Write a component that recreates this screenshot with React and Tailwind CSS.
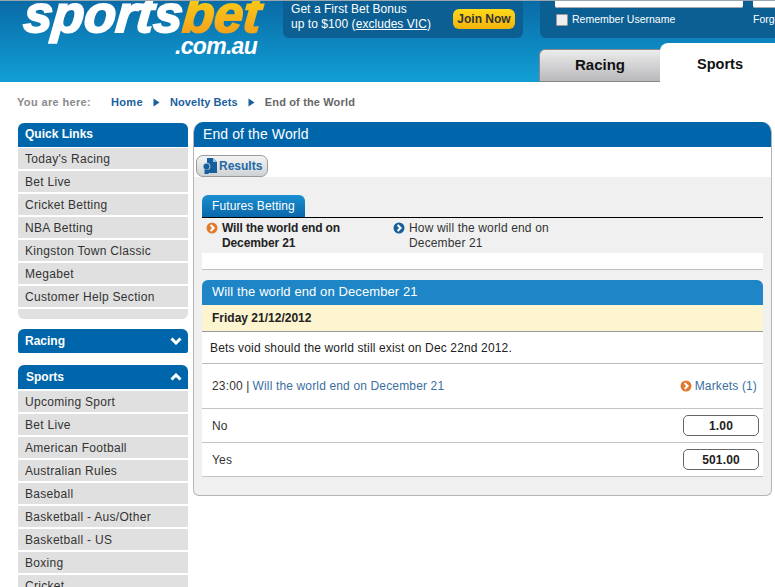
import React from "react";

const font = { fontFamily: '"Liberation Sans", Arial, sans-serif' };

function Chevron({ color }) {
  return (
    <svg width="12" height="12" viewBox="0 0 12 12" className="shrink-0">
      <circle cx="6" cy="6" r="5.5" fill={color} />
      <path d="M4.6 3l3 3-3 3" fill="none" stroke="#fff" strokeWidth="2" />
    </svg>
  );
}

function Caret({ up }) {
  return (
    <svg width="12" height="8" viewBox="0 0 12 8">
      <path d={up ? "M1.5 6.5L6 2l4.5 4.5" : "M1.5 1.5L6 6l4.5-4.5"} fill="none" stroke="#fff" strokeWidth="3" />
    </svg>
  );
}

function Crumb() {
  return (
    <svg width="7" height="9" viewBox="0 0 7 9" className="ml-[10px] mr-[10px]">
      <path d="M0.5 0.5l6 4-6 4z" fill="#1a5f9e" />
    </svg>
  );
}

function ResultIcon() {
  return (
    <svg width="16" height="16" viewBox="0 0 16 16" className="shrink-0">
      <path d="M5 0h6l4 4v11H5z" fill="#15609c" />
      <path d="M11 0l4 4h-4z" fill="#9cc3de" />
      <circle cx="4.5" cy="8.5" r="3.5" fill="#15609c" stroke="#dfe6ea" strokeWidth="0.8" />
      <path d="M2.5 11.5h4V16h-4z" fill="#15609c" />
    </svg>
  );
}

function Item({ children }) {
  return (
    <div className="h-[21px] bg-[#e0e0e0] pl-[7px] text-[12px] leading-[23px] tracking-[0.3px] text-[#333]">{children}</div>
  );
}

function SideHead({ children, up, caret, rounded, pl, extra }) {
  return (
    <div className={`flex items-center justify-between bg-[#0066ab] pr-[6px] text-[12px] font-bold text-white ${rounded} ${pl} ${extra}`}>
      <span>{children}</span>
      {caret && <Caret up={up} />}
    </div>
  );
}

function OddsRow({ label, value }) {
  return (
    <div className="flex h-[34px] items-center justify-between border-b border-[#c4c4c4] pl-[10px] pr-[4px] text-[12px] tracking-[0.15px] text-[#333]">
      <span>{label}</span>
      <span className="flex h-[21px] w-[76px] items-center justify-center rounded-[5px] border border-[#666] bg-white font-bold text-[12px] text-[#222]">{value}</span>
    </div>
  );
}

export default function App() {
  const quick = ["Today's Racing", "Bet Live", "Cricket Betting", "NBA Betting", "Kingston Town Classic", "Megabet", "Customer Help Section"];
  const sports = ["Upcoming Sport", "Bet Live", "American Football", "Australian Rules", "Baseball", "Basketball - Aus/Other", "Basketball - US", "Boxing", "Cricket"];
  return (
    <div className="h-[587px] w-[775px] overflow-hidden bg-white" style={font}>
      {/* header */}
      <header className="flex h-[82px] overflow-hidden border-t border-[#9aa7b0] bg-gradient-to-b from-[#0a6ba6] to-[#129fd6]">
        <div className="w-[283px] shrink-0 pl-[24px]">
          <div className="-mt-[12px] flex h-[50px] -skew-x-[5deg] items-center whitespace-nowrap text-[52px] font-bold italic leading-[52px]">
            <span className="text-white [-webkit-text-stroke:2px_white]">sports</span>
            <span className="bg-gradient-to-b from-[#fbd813] to-[#f09a1c] bg-clip-text pr-[4px] text-transparent [-webkit-text-stroke:2px_transparent]">bet</span>
          </div>
          <div className="-mt-[2px] pl-[151px] text-[23px] font-bold italic leading-[18px] tracking-[-0.7px] text-white">.com.au</div>
        </div>
        <div className="flex-1">
          <div className="flex h-[37px]">
            <div className="flex h-[37px] w-[240px] items-center justify-between rounded-b-[6px] bg-[#0b5f93] pl-[8px] pr-[8px]">
              <div className="-mt-[6px] text-[12px] leading-[15px] tracking-[0.05px] text-white">
                <div>Get a First Bet Bonus</div>
                <div>up to $100 (<span className="underline">excludes VIC</span>)</div>
              </div>
              <div className="-mt-[2px] flex h-[20px] w-[62px] items-center justify-center rounded-[6px] bg-gradient-to-b from-[#ffd91c] to-[#f2b40a] text-[12px] font-bold text-[#333]">Join Now</div>
            </div>
            <div className="ml-[17px] h-[37px] flex-1 overflow-hidden rounded-bl-[6px] bg-[#0b5f93] pl-[15px]">
              <div className="-mt-[14px] flex gap-[10px]">
                <div className="h-[21px] w-[188px] shrink-0 rounded-[2px] border-b border-[#aaa] bg-white pl-[6px] text-[12px] leading-[19px] text-[#555]">Enter Username</div>
                <div className="h-[21px] w-[40px] shrink-0 rounded-[2px] border-b border-[#aaa] bg-white pl-[6px] text-[12px] leading-[19px] text-[#555]">Enter</div>
              </div>
              <div className="mt-[4px] flex items-center whitespace-nowrap text-[10.5px] text-white">
                <span className="ml-[1px] h-[12px] w-[12px] shrink-0 rounded-[1px] border border-[#999] bg-[#eee]" />
                <span className="ml-[4px] w-[181px]">Remember Username</span>
                <span>Forgot</span>
              </div>
            </div>
          </div>
          <div className="mt-[5px] flex h-[39px] items-end pl-[256px]">
            <div className="flex h-[33px] w-[121px] items-center justify-center rounded-tl-[6px] border border-r-0 border-[#888] bg-gradient-to-b from-[#ececec] to-[#b9b9bc] pb-[1px] text-[15px] font-bold text-[#111]">Racing</div>
            <div className="flex h-[39px] flex-1 items-center justify-center rounded-t-[8px] bg-white pr-[13px] pt-[5px] text-[14.5px] font-bold text-[#111]">Sports</div>
          </div>
        </div>
      </header>

      {/* breadcrumb */}
      <nav className="flex h-[41px] items-center pl-[17px] text-[11px] font-bold">
        <span className="w-[94px] tracking-[0.35px] text-[#8a8a8a]">You are here:</span>
        <span className="tracking-[0.35px] text-[#1a5f9e]">Home</span>
        <Crumb />
        <span className="tracking-[0.1px] text-[#1a5f9e]">Novelty Bets</span>
        <Crumb />
        <span className="tracking-[0.15px] text-[#666]">End of the World</span>
      </nav>

      <div className="flex items-start pl-[18px] pr-[3px]">
        {/* sidebar */}
        <aside className="w-[170px] shrink-0">
          <SideHead rounded="rounded-t-[6px]" pl="pl-[7px]" extra="h-[24px] pb-[2px]">Quick Links</SideHead>
          <div className="mt-[1px] flex flex-col gap-[2px]">
            {quick.map((q) => <Item key={q}>{q}</Item>)}
            <div className="h-[10px] rounded-b-[6px] bg-[#e0e0e0]" />
          </div>
          <div className="mt-[10px]">
            <SideHead caret rounded="rounded-t-[6px] rounded-b-[2px]" pl="pl-[7px]" extra="h-[24px]">Racing</SideHead>
          </div>
          <div className="mt-[12px]">
            <SideHead caret up rounded="rounded-t-[6px]" pl="pl-[8px]" extra="h-[24px]">Sports</SideHead>
          </div>
          <div className="mt-[2px] flex flex-col gap-[2px]">
            {sports.map((q) => <Item key={q}>{q}</Item>)}
          </div>
        </aside>

        {/* main */}
        <main className="-mt-[1px] ml-[5px] flex-1 overflow-hidden rounded-t-[10px] rounded-b-[6px] border-x border-b border-[#b5b5b5] bg-[#f0f0f0]">
          <div className="-mx-[1px] flex h-[25px] items-center bg-[#0066ab] pl-[10px] text-[14px] tracking-[0.1px] text-white">End of the World</div>
          <div className="flex h-[30px] items-start bg-white pl-[2px] pt-[8px]">
            <div className="flex h-[22px] w-[72px] items-center gap-[1px] rounded-[7px] border border-[#999] bg-gradient-to-b from-[#f4f4f4] to-[#cfd2d4] pl-[5px] text-[12px] font-bold text-[#1f6aa5]">
              <ResultIcon />
              <span>Results</span>
            </div>
          </div>
          <div className="px-[8px] pt-[18px] pb-[18px]">
            <div>
              <div className="flex h-[22px] w-[103px] items-center rounded-t-[6px] bg-gradient-to-b from-[#1a8fd0] to-[#0a68ac] pl-[10px] text-[12px] tracking-[0.1px] text-white">Futures Betting</div>
              <div className="h-[1px] bg-black" />
              <div className="flex h-[35px] pl-[4px]">
                <div className="flex w-[187px] gap-[4px] pt-[3px] text-[12px] font-bold leading-[15px] tracking-[-0.12px] text-[#222]">
                  <span className="mt-[1px]"><Chevron color="#e07a2e" /></span>
                  <span className="w-[130px]">Will the world end on December 21</span>
                </div>
                <div className="flex gap-[4px] pt-[3px] text-[12px] leading-[15px] text-[#333]">
                  <span className="mt-[1px]"><Chevron color="#15609c" /></span>
                  <span className="w-[150px] tracking-[0.15px]">How will the world end on December 21</span>
                </div>
              </div>
              <div className="h-[17px] border-b border-[#c0c0c0] bg-white" />
            </div>
            <section className="mt-[10px]">
              <div className="flex h-[25px] items-center rounded-t-[6px] bg-[#1e85c6] pb-[1px] pl-[10px] text-[13px] tracking-[0.1px] text-white">Will the world end on December 21</div>
              <div className="flex h-[27px] items-center border-b border-[#999] bg-[#fdf5cf] pl-[10px] text-[12px] font-bold text-[#222]">Friday 21/12/2012</div>
              <div className="flex h-[32px] items-center border-b border-[#bbb] bg-white pl-[8px] text-[12px] tracking-[0.15px] text-[#222]">Bets void should the world still exist on Dec 22nd 2012.</div>
              <div className="flex h-[45px] items-center justify-between border-b border-[#c4c4c4] bg-white pl-[10px] pr-[6px] text-[12px] tracking-[0.15px]">
                <span className="flex gap-[3px] text-[#333]"><span>23:00 |</span><span className="text-[#3a6f9f]">Will the world end on December 21</span></span>
                <span className="flex items-center gap-[3px] text-[#3a6f9f]"><Chevron color="#e07a2e" />Markets (1)</span>
              </div>
              <div className="bg-white">
                <OddsRow label="No" value="1.00" />
                <OddsRow label="Yes" value="501.00" />
              </div>
            </section>
          </div>
        </main>
      </div>
    </div>
  );
}
